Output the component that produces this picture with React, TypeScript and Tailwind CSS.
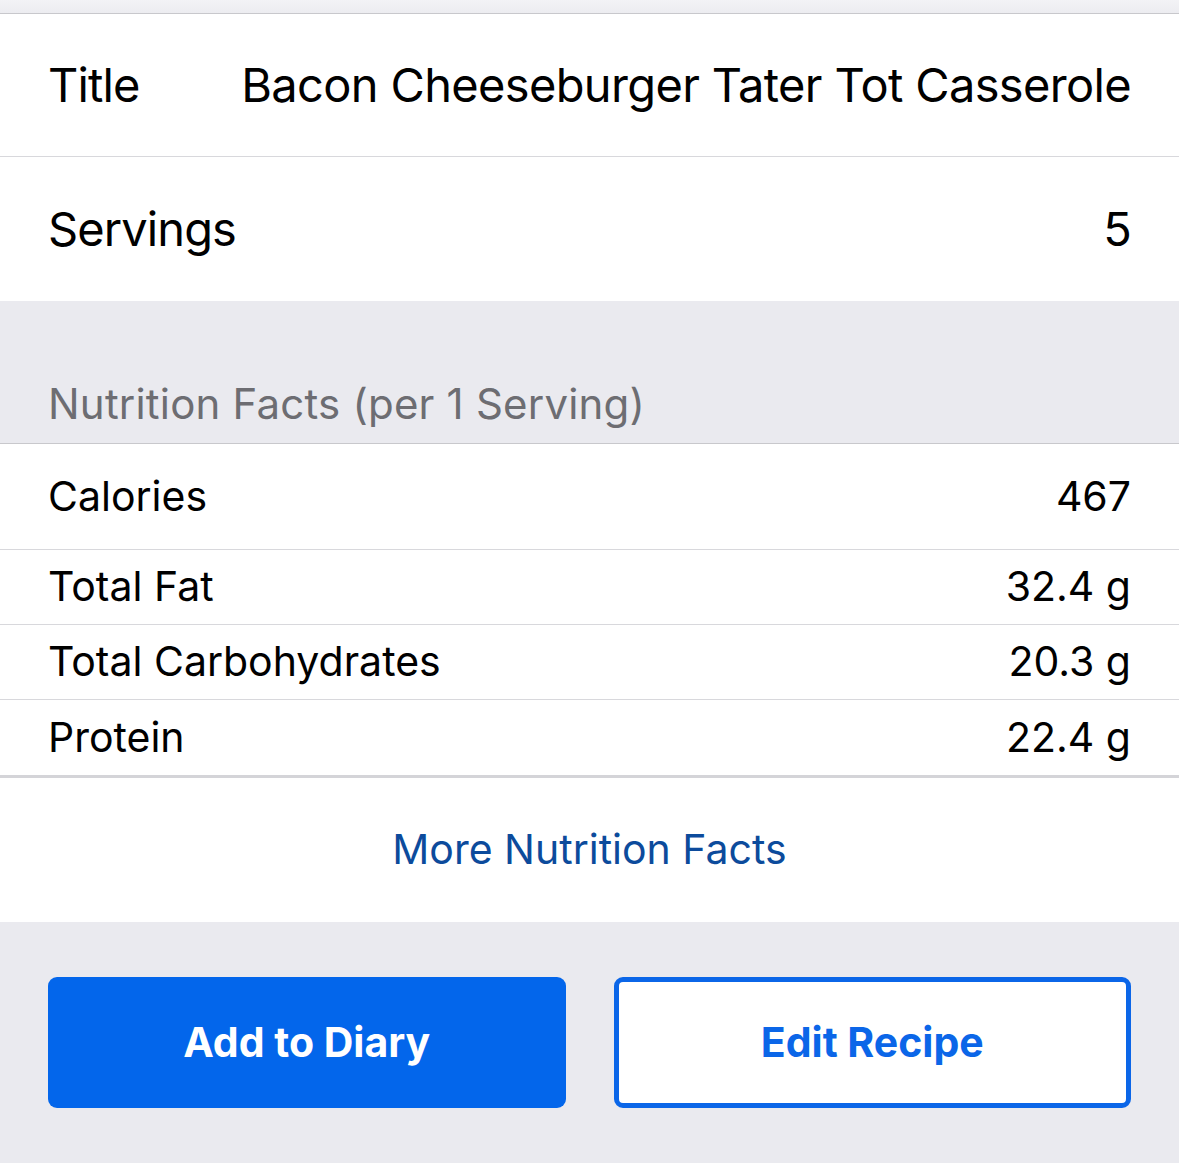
const font = { fontFamily: "Inter, 'Noto Sans', sans-serif" }

function NutrientRow({ label, value, tall }: { label: string; value: string; tall?: boolean }) {
  return (
    <div
      className={`flex items-center justify-between px-[48px] border-b border-[#d8d8dc] text-[41px] text-black ${
        tall ? "h-[106px]" : "h-[75px]"
      }`}
    >
      <span>{label}</span>
      <span>{value}</span>
    </div>
  )
}

export default function App() {
  return (
    <div className="w-[1179px] h-[1163px] bg-[#eaeaef] overflow-hidden" style={font}>
      <div className="h-[14px] bg-gradient-to-b from-[#f3f3f6] to-[#ececf0] border-b border-[#c8c8cc]" />

      <div className="bg-white">
        <div className="h-[143px] flex items-center justify-between px-[48px] border-b border-[#d8d8dc] text-[47px] text-black">
          <span className="tracking-[-0.9px]">Title</span>
          <span className="tracking-[-0.65px]">Bacon Cheeseburger Tater Tot Casserole</span>
        </div>
        <div className="h-[144px] flex items-center justify-between px-[48px] text-[47px] text-black tracking-[-0.9px]">
          <span>Servings</span>
          <span>5</span>
        </div>
      </div>

      <div className="h-[143px] flex items-end px-[48px] pb-[8px] border-b border-[#c8c8cc]">
        <span className="text-[42px] text-[#6d6d72] tracking-[0.2px]">Nutrition Facts (per 1 Serving)</span>
      </div>

      <div className="bg-white border-b-[3px] border-[#d4d4d8]">
        <NutrientRow label="Calories" value="467" tall />
        <NutrientRow label="Total Fat" value="32.4 g" />
        <NutrientRow label="Total Carbohydrates" value="20.3 g" />
        <div className="h-[75px] flex items-center justify-between px-[48px] text-[41px] text-black">
          <span>Protein</span>
          <span>22.4 g</span>
        </div>
      </div>

      <div className="h-[144px] bg-white flex items-center justify-center">
        <span className="text-[41px] text-[#0c4b9c]">More Nutrition Facts</span>
      </div>

      <div className="grid grid-cols-2 gap-[48px] px-[48px] pt-[55px]">
        <button className="h-[131px] rounded-[9px] bg-[#0366eb] text-white text-[41px] font-bold">
          Add to Diary
        </button>
        <button className="h-[131px] rounded-[9px] bg-white border-[5px] border-[#0b66e8] text-[#0b66e8] text-[41px] font-bold">
          Edit Recipe
        </button>
      </div>
    </div>
  )
}
